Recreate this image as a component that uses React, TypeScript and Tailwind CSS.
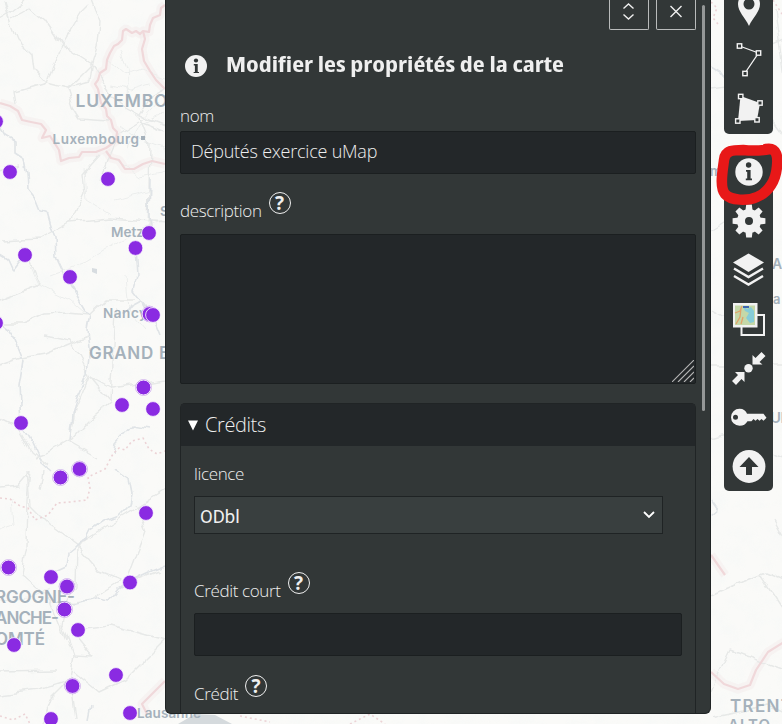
import React from "react";

const fira = "font-['Open_Sans','Noto_Sans',sans-serif]";
const label = "text-[17px] leading-[22px] font-[330] tracking-[-0.36px] text-[#efefef]";

const dots: [number, number, boolean?][] = [
  [-4, 121.5], [10, 172], [108, 179], [149, 233], [135.5, 248], [25, 255], [70, 277],
  [-4, 323], [149.5, 314, true], [153, 315], [143.5, 387.5, true], [122, 405], [153, 409],
  [21, 423], [79.5, 469, true], [60.5, 477.5, true], [146, 513], [8.5, 567.5, true], [51, 577],
  [67, 586.5, true], [130, 582.5], [64.5, 609.5, true], [78, 630], [14, 645], [116, 675],
  [72.5, 686, true], [130, 713], [51, 719],
];

const roads = [
  "M0 18 L10 12 L25 0 M5 0 L12 25 L18 40 L32 54 L34 70 L46 83 L61 45 L80 13 L88 5",
  "M12 18 L30 8 L45 21 L61 45 L92 65 L120 105 L140 116 L165 126",
  "M91 0 L100 22 L98 44 L91 66 L89 82 L66 88 L46 83 L18 91 L14 92 L16 104",
  "M91 66 L75 82 L67 89 L73 108 L80 119 L108 121 M140 118 L150 145 L148 230",
  "M140 116 L153 95 L165 88 M139 122 L118 135 L108 158 L100 180 M140 122 L165 132",
  "M0 172 L20 166 M0 240 L40 238 L70 222 L84 192 L82 175 L100 155 M70 222 L110 218 L165 222",
  "M0 322 L22 322 L44 313 L67 312 L90 314 L105 300 L135 300 M22 245 L39 284 L0 300",
  "M115 310 L113 345 L110 400 L90 376 L70 340 L45 335 M90 376 L112 388 L165 380",
  "M0 365 L22 358 L45 354 L88 336 M89 376 L75 410 L70 442 L98 458",
  "M0 420 L20 430 L32 452 L48 465 M110 402 L89 420 L71 440 L55 449 L34 458",
  "M0 488 L18 486 L30 472 L27 500 L26 545 L21 575 L50 600 L66 640 M44 470 L41 489",
  "M77 545 L50 525 L30 505 L27 472 M77 545 L100 572 L120 580 L90 600 L68 605 M77 545 L120 518 L165 490",
  "M77 545 L76 585 L66 602 L62 625 L73 655 L68 682 L50 700 L42 724",
  "M73 655 L92 656 L70 630 L110 625 L165 640 M73 670 L100 692 L125 680 L165 640",
  "M0 671 L55 670 M0 695 L40 690 L72 680 L77 720 M125 583 L145 530 L135 505 M125 583 L160 570",
  "M711 90 L725 88 L740 60 L784 40 M711 230 L724 222 L740 215 M775 10 L784 80",
  "M711 438 L725 434 L784 460 M711 595 L745 580 L765 572 L784 580 M760 575 L784 612",
  "M711 718 L745 711 L765 704 L784 712 M711 365 L784 365 M773 120 L784 135",
  "M711 310 L725 318 L730 340 M773 520 L784 540 M711 690 L730 650 L784 670",
];

const lanes = [
  "M108 60 L125 75 L140 70 L165 78 M112 85 L130 90 L150 84 M120 50 L128 70 L126 95",
  "M128 148 L140 125 L165 112 M120 125 L140 140 L165 150 M130 110 L142 120 L160 100",
  "M84 168 L86 200 L110 215 M118 160 L140 178 L165 172 M115 200 L150 190",
  "M160 220 L120 240 L85 262 L50 275 M30 268 L38 285 L70 300 L84 312",
  "M125 275 L128 310 L145 330 M0 600 L30 598 L50 588 M0 530 L14 525 L12 500",
];

const rivers = [
  "M0 128 L5 136 L15 142 L15 152 L24 158 L27 174 L28 190 L36 200 L40 210 L47 211 L51 225 L55 239 L56 256 L65 275 L79 301 L85 311 L91 314 L88 330 L90 350 L87 373 L78 395 L73 415 L70 440",
  "M0 255 L8 260 L13 271 L25 255 M0 323 L7 328 L15 340 L23 360 L19 385 L21 424 L31 440 L41 462 L50 470",
  "M150 180 L149 215 L151 240 M135 248 L137 276 L133 290 L152 315 L160 335 M132 306 L122 313 L142 302 L151 320",
  "M115 470 L129 480 L132 495 L130 505 L119 516 L103 522 L91 530 L87 538 L79 542 L73 548 L68 552 L66 566 L53 572 L50 580",
  "M57 600 L76 604 L99 598 L110 600 L119 588 L135 578 L150 571 L165 565 M114 455 L116 443 L132 425 L149 428",
  "M90 705 L87 720 M711 67 L721 73 L727 82 M711 516 L718 510 L711 500",
];

const borders = [
  "M165 5 L161 8 L160 15 L153 18 L150 25 L149 32 L143 31 L140 34 L136 31 L132 33 L126 29 L123 31 L122 40 L118 44 L114 46 L110 53 L107 60 L106 69 L100 73 L98 80 L95 84 L98 89 L101 103 L106 109 L107 116 L111 120 L113 128 L117 132 L116 141 L106 148 L96 152 L82 152 L79 157 L69 158 L61 161 L59 150 L50 136 L42 138 L46 130 L41 124 L31 122 L22 120 L18 111 L10 106 L0 103",
  "M143 31 L145 39 L142 49 L144 61 L150 71 L156 80 L165 89 M106 151 L111 158 L119 160 L125 169 L134 169 L143 164 L152 161 L165 164",
  "M165 681 L142 704 L147 714 M711 555 L718 565 L725 575 M711 672 L724 684 L738 689 L750 685 L756 670 L768 652 L784 642",
];

const dotted = [
  "M0 498 L10 499 L20 506 L28 508 L35 520 L48 515 L57 503 L70 502 L87 500 L90 488 L88 477 L105 469 L113 454 L119 448 L125 450 L132 441 L143 438 L149 449 L157 454 L165 451",
  "M0 716 L13 720 L25 714 L30 724 M711 2 L717 8 L713 18 L718 24 M773 0 L782 14 M350 724 L370 714 L385 724 M240 716 L270 722",
];

function MapBackground() {
  return (
    <svg className="absolute inset-0 h-[724px] w-[782px]" viewBox="0 0 782 724">
      <defs>
        <filter id="relief" x="0" y="0" width="100%" height="100%">
          <feTurbulence type="fractalNoise" baseFrequency="0.055" numOctaves="3" seed="8" />
          <feColorMatrix values="0 0 0 0 .92  0 0 0 0 .94  0 0 0 0 .93  2 0 0 0 -.8" />
        </filter>
        <filter id="winding" filterUnits="userSpaceOnUse" x="0" y="0" width="782" height="724">
          <feTurbulence type="fractalNoise" baseFrequency="0.06" numOctaves="2" seed="3" result="n" />
          <feDisplacementMap in="SourceGraphic" in2="n" scale="9" xChannelSelector="R" yChannelSelector="G" />
          <feGaussianBlur stdDeviation=".4" />
        </filter>
      </defs>
      <rect width="782" height="724" fill="#fafaf8" />
      <rect width="782" height="724" filter="url(#relief)" opacity=".65" />
      <g fill="none" strokeLinejoin="round">
        {borders.map((d) => <path key={d} d={d} stroke="#f3e9e9" strokeWidth="9" opacity=".4" />)}
        <g filter="url(#winding)">
          {lanes.map((d) => <path key={d} d={d} stroke="#eceeed" strokeWidth="1" />)}
          {roads.map((d) => <path key={d} d={d} stroke="#e7e9e8" strokeWidth="1.400" />)}
          {rivers.map((d) => <path key={d} d={d} stroke="#e0e4e7" strokeWidth="1.600" />)}
        </g>
        {borders.map((d) => <path key={d} d={d} stroke="#f0d8da" strokeWidth="2.200" />)}
        {dotted.map((d) => <path key={d} d={d} stroke="#ecd3d6" strokeWidth="1.600" strokeDasharray="2 3" />)}
      </g>
      <path d="M178 724 L195 714 L215 715 L232 724Z" fill="#d5dadd" />
      <path d="M92 268 L97 269 L97 274 L92 272Z" fill="#d7dce0" />
      <g fill="#a5b1bb" fontFamily="Inter, sans-serif" fontWeight="600">
        <text x="75.500" y="106.500" fontSize="17.500" textLength="92">LUXEMBO</text>
        <text x="89" y="359" fontSize="17" textLength="104">GRAND EST</text>
        <text x="-5" y="603" fontSize="17" textLength="80">RGOGNE-</text>
        <text x="-5" y="624" fontSize="17" textLength="64">ANCHE-</text>
        <text x="-5" y="645" fontSize="17" textLength="50">OMTÉ</text>
        <text x="730" y="712" fontSize="17" textLength="62">TRENT</text>
        <text x="728" y="730" fontSize="15" textLength="42">ALTO</text>
        <text x="52.500" y="144" fontSize="13.500" textLength="86.500">Luxembourg</text>
        <rect x="141" y="136" width="4" height="4" />
        <text x="111" y="237" fontSize="13.500" textLength="33">Metz</text>
        <text x="103" y="318" fontSize="13.500" textLength="44">Nancy</text>
        <text x="160" y="216" fontSize="13.500">Sa</text>
        <text x="137" y="718" fontSize="13.500" textLength="64">Lausanne</text>
        <text x="710" y="176" fontSize="13">m</text>
        <text x="772" y="269" fontSize="14">A</text>
        <text x="773" y="304" fontSize="13">a</text>
        <text x="770" y="423" fontSize="15" textLength="22">UN</text>
      </g>
      {dots.map(([x, y, ring], i) => (
        <g key={i}>
          {ring && <circle cx={x} cy={y} r="7.800" fill="#fff" stroke="#a86ce0" strokeWidth=".7" />}
          <circle cx={x} cy={y} r="7.400" fill="#8a2be2" stroke="#fff" strokeWidth=".8" />
        </g>
      ))}
    </svg>
  );
}

function Help() {
  return (
    <span className="flex h-[22px] w-[22px] shrink-0 items-center justify-center rounded-full border-[1.5px] border-[#efefef] font-['Open_Sans',sans-serif] text-[19px] leading-none font-bold tracking-normal text-[#efefef]">
      ?
    </span>
  );
}

function InfoIcon({ className }: { className: string }) {
  return (
    <svg className={className} viewBox="0 0 28 28">
      <circle cx="14" cy="14" r="14" fill="#f2f2f2" />
      <circle cx="14" cy="7" r="2.700" fill="#323737" />
      <path d="M11.200 11.500h5v10h1.600V23h-6.800v-1.500h1.600v-8h-1.400z" fill="#323737" />
    </svg>
  );
}

function Tool({ children }: { children: React.ReactNode }) {
  return (
    <div className="h-[49px] w-[49px] shrink-0">
      <svg className="h-[49px] w-[49px]" viewBox="0 0 49 49" fill="#f2f2f2">{children}</svg>
    </div>
  );
}

function Handles({ points }: { points: [number, number][] }) {
  return (
    <>
      {points.map(([x, y]) => (
        <rect key={x} x={x - 2.2} y={y - 2.2} width="4.400" height="4.400" fill="#323737" stroke="#f2f2f2" strokeWidth="1.400" />
      ))}
    </>
  );
}

function Toolbar() {
  const gear = Array.from({ length: 8 }, (_, i) => i * 45);
  return (
    <div className="ml-[13px] flex w-[49px] flex-col gap-[13px]">
      <div className="flex h-[134px] flex-col justify-end overflow-hidden rounded-b-[5px] bg-[#323737]">
        <Tool>
          <path fillRule="evenodd" d="M25 39C21 30 14 25 14 17a11 11 0 0 1 22 0c0 8-7 13-11 22zM25 11.500a5.500 5.500 0 1 0 0 11 5.500 5.500 0 0 0 0-11z" />
        </Tool>
        <Tool>
          <path d="M15.500 10 34.500 17 21 37" fill="none" stroke="#f2f2f2" strokeWidth="1.300" />
          <Handles points={[[15.5, 10], [34.5, 17], [21, 37.5]]} />
        </Tool>
        <Tool>
          <path d="M16.500 11 36 18 33 35 14 36z" />
          <Handles points={[[16.7, 11.5], [36, 18], [33, 34.8], [13.8, 36]]} />
        </Tool>
      </div>
      <div className="flex h-[344px] flex-col rounded-[5px] bg-[#323737]">
        <Tool>
          <circle cx="25" cy="25" r="13.700" />
          <circle cx="24.600" cy="18" r="2.700" fill="#323737" />
          <path d="M22 23h4.600v8.500h1.400v1.700h-6.200v-1.700h1.400v-6.800H22z" fill="#323737" />
        </Tool>
        <Tool>
          {gear.map((a) => (
            <path key={a} d="M21.400 15 22.200 8.600h5.600l.8 6.400z" transform={`rotate(${a} 25 25)`} />
          ))}
          <path fillRule="evenodd" d="M25 13a12 12 0 1 0 0 24 12 12 0 0 0 0-24zm0 8a4 4 0 1 1 0 8 4 4 0 0 1 0-8z" />
        </Tool>
        <Tool>
          <path d="M24.500 8.500 40 17.500 24.500 27 9 17.500z" />
          <path d="m10 23.500 14.500 8.500L39 23.500M10 31l14.500 8.500L39 31" fill="none" stroke="#f2f2f2" strokeWidth="2.500" />
        </Tool>
        <Tool>
          <path d="M17.500 36V21h22.500v20H17.500z" fill="none" stroke="#f2f2f2" strokeWidth="2" />
          <path d="M9 9h24.500v24.500H9z" />
          <path d="M11 11.500h20v19.500H11z" fill="#c5d8a8" />
          <path d="M19 13h2l2 2 4-2 3 4v11l-4 1-4-5 3-5-4-2z" fill="#86ccd8" />
          <path d="M19 12h6v2h-6z" fill="#3f66ae" />
          <path d="m11 19 5-2 2-5M12 30l4-7 1-9M17 30l2-7" fill="none" stroke="#e2a169" strokeWidth="1.300" />
        </Tool>
        <Tool>
          <circle cx="24.500" cy="25.300" r="4.200" />
          <path d="M28.500 21.500V12l3 3 6-6 4 4-6 6 3 2.500zM20.500 29v10l-3-3-5.500 6-4-4 6-6-3-3z" />
        </Tool>
        <Tool>
          <path fillRule="evenodd" d="M15.500 16.700c4 0 6.500 2 7.500 5h16.500l3 4-3 3-2-1.800-2 1.800-2-1.800-2 1.800-2-1.800-2 2.300h-4c-2 3-4 4.500-8 4.500a8.500 8.500 0 0 1 0-17zM11.500 22.700a2.500 2.500 0 1 0 0 5 2.500 2.500 0 0 0 0-5z" />
        </Tool>
        <Tool>
          <circle cx="25" cy="25.500" r="16.400" />
          <path d="M25 16 34.500 26h-6.500v8h-6v-8H15.500z" fill="#323737" />
        </Tool>
      </div>
    </div>
  );
}

function Panel() {
  return (
    <div className={`flex h-[714px] w-[546px] shrink-0 flex-col overflow-hidden rounded-b-[6px] border border-t-0 border-[#202425] bg-[#323737] pr-[14px] pl-[14px] text-[#efefef] ${fira}`}>
      <div className="flex h-[30px] shrink-0 justify-end gap-[7px]">
        <button className="flex h-[30px] w-[40px] justify-center rounded-b-[2px] border border-t-0 border-[#b9bbbb]">
          <svg className="h-[24px] w-[20px]" viewBox="0 0 20 24" fill="none" stroke="#efefef" strokeWidth="1.400"><path d="m4.500 8.500 5-4.500 5 4.500M4.500 14.500l5 4.500 5-4.500" /></svg>
        </button>
        <button className="flex h-[30px] w-[40px] justify-center rounded-b-[2px] border border-t-0 border-[#b9bbbb]">
          <svg className="h-[24px] w-[20px]" viewBox="0 0 20 24" fill="none" stroke="#efefef" strokeWidth="1.400"><path d="m4.500 6 11 11m0-11-11 11" /></svg>
        </button>
      </div>
      <div className="flex h-[70px] shrink-0 items-center pl-[5px]">
        <InfoIcon className="mt-[2px] h-[22px] w-[22px]" />
        <h3 className="mb-[3px] ml-[19px] origin-left scale-x-[1.182] text-[22px] font-bold whitespace-nowrap font-stretch-[75%]">Modifier les propriétés de la carte</h3>
      </div>
      <div className={`h-[31px] shrink-0 pt-[5px] ${label}`}>nom</div>
      <div className="flex h-[43px] shrink-0 items-center rounded-[2px] border border-[#1b1f20] bg-[#232729] px-[10px] pb-[3px] text-[18px] font-[330] tracking-[-0.22px]">Députés exercice uMap</div>
      <div className={`flex h-[60px] shrink-0 gap-[7px] pt-[18px] ${label}`}>
        <span className="pt-[8px]">description</span>
        <Help />
      </div>
      <div className="flex h-[150px] shrink-0 items-end justify-end rounded-[2px] border border-[#1b1f20] bg-[#232729] pr-px pb-px">
        <svg className="h-[22px] w-[22px]" viewBox="0 0 22 22" stroke="#b5b5b5" strokeWidth="1.100"><path d="M0 22 22 0M6 22 22 6M12 22 22 12M18 22 22 18" /></svg>
      </div>
      <div className="mt-[19px] flex h-[311px] w-[516px] shrink-0 flex-col rounded-t-[5px] border border-b-0 border-[#202425]">
        <div className="flex h-[42px] shrink-0 items-center bg-[#232729] pl-[7px]">
          <svg className="h-[11px] w-[10px]" viewBox="0 0 10 11" fill="#fff"><path d="M0 .5h10L5 10.500z" /></svg>
          <span className="ml-[7px] text-[20px] font-[330] tracking-[-0.4px]">Crédits</span>
        </div>
        <div className="flex flex-col pr-[13px] pl-[13px]">
          <div className={`h-[50px] pt-[17px] ${label}`}>licence</div>
          <div className="flex h-[38px] w-[469px] items-center justify-between border border-[#1f2324] bg-[#393f3f] pr-[7px] pl-[5px]">
            <span className="pt-[3px] font-[Roboto,sans-serif] text-[18.500px] leading-[24px]">ODbl</span>
            <svg className="h-[8px] w-[12px]" viewBox="0 0 12 8" fill="none" stroke="#fff" strokeWidth="1.800"><path d="m1 1 5 5 5-5" /></svg>
          </div>
          <div className={`flex h-[79px] gap-[7px] pt-[38px] ${label}`}>
            <span className="pt-[8px]">Crédit court</span>
            <Help />
          </div>
          <div className="h-[43px] w-[488px] rounded-[2px] border border-[#1b1f20] bg-[#232729]" />
          <div className={`flex h-[57px] gap-[7px] pt-[19px] ${label}`}>
            <span className="pt-[8px]">Crédit</span>
            <Help />
          </div>
        </div>
      </div>
    </div>
  );
}

export default function App() {
  return (
    <div className="relative h-[724px] w-[784px] overflow-hidden bg-white">
      <MapBackground />
      <div className="relative flex items-start pl-[165px]">
        <Panel />
        <Toolbar />
        <div className="absolute top-[5px] left-[702px] h-[406px] w-[3px] rounded-full bg-[#959797]" />
      </div>
      <svg className="absolute top-0 left-0 h-[724px] w-[782px]" viewBox="0 0 782 724">
        <path d="M766 149C777 147 778 157 777 166C776 180 769 192 757 197C748 201 731 201 725 194C719 187 723 169 724 160C725 150 733 150 743 150C752 151 760 151 770 149" fill="none" stroke="#e81818" strokeWidth="10.500" strokeLinecap="round" strokeLinejoin="round" />
      </svg>
    </div>
  );
}
